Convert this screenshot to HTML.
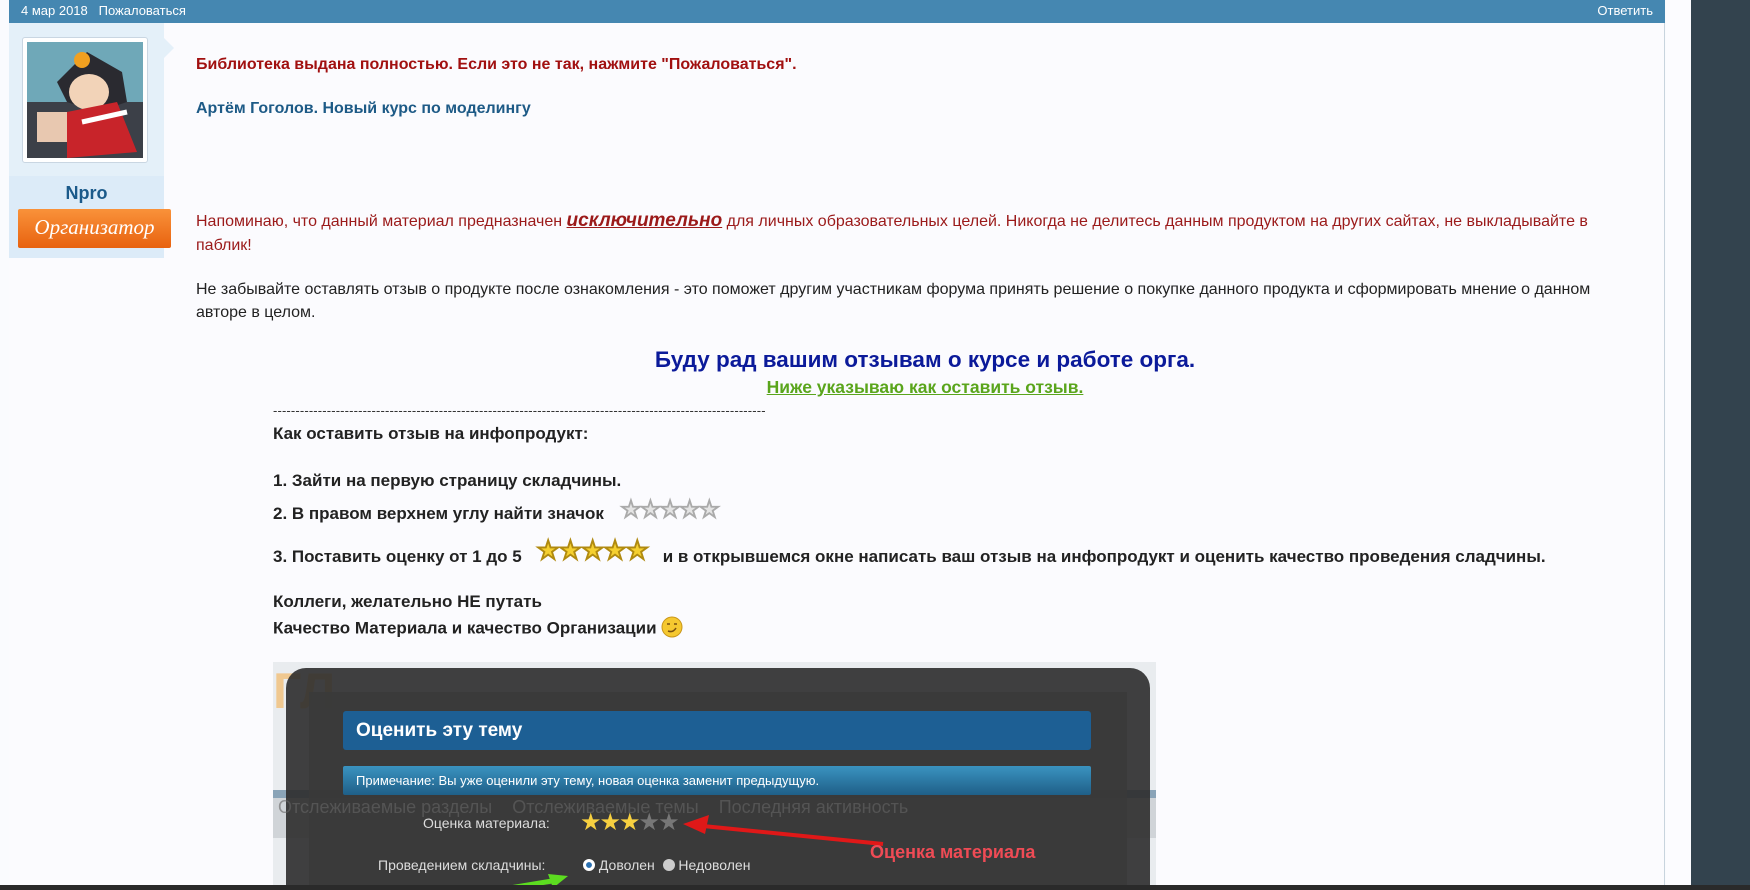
<!DOCTYPE html>
<html><head><meta charset="utf-8">
<style>
*{margin:0;padding:0;box-sizing:border-box}
body{width:1750px;height:890px;overflow:hidden;background:#fafbfe;font-family:"Liberation Sans",Arial,sans-serif;position:relative}
.abs{position:absolute;white-space:nowrap}
.bar{left:9px;top:0;width:1656px;height:23px;background:#4587b1;color:#fff;font-size:13px}
.main{left:9px;top:23px;width:1656px;height:867px;background:#fbfbfe;border-right:1px solid #c8d4de}
.side{left:9px;top:23px;width:155px;height:235px;background:#e4f0f9}
.t{font-size:16px;color:#222}
.l{font-size:17px;color:#222;font-weight:bold}
.b{font-weight:bold}
.st{line-height:0;display:inline-block;vertical-align:middle}
</style></head><body>
<div class="abs main"></div>
<div class="abs" style="left:1666px;top:0;width:25px;height:890px;background:#fcfcff"></div>
<div class="abs" style="left:1691px;top:0;width:59px;height:890px;background:#33434e"></div>
<div class="abs bar"><span style="position:absolute;left:12px;top:3px">4 мар 2018 &nbsp;&nbsp;Пожаловаться</span><span style="position:absolute;right:12px;top:3px">Ответить</span></div>
<div class="abs side"></div>
<div class="abs" style="left:9px;top:176px;width:155px;height:82px;background:#dcebf8"></div>
<div class="abs" style="left:164px;top:38px;width:0;height:0;border-top:10px solid transparent;border-bottom:10px solid transparent;border-left:10px solid #e4f0f9"></div>
<div class="abs" style="left:22px;top:37px;width:126px;height:126px;background:#fff;border:1px solid #c9d6e2;border-radius:3px;padding:4px">
<svg width="116" height="116" viewBox="0 0 116 116"><rect width="116" height="116" fill="#6fa8b8"/><rect y="60" width="116" height="56" fill="#3c4048"/><path d="M30 40 L60 10 L95 30 L100 60 L70 70 L40 60Z" fill="#2a2a30"/><ellipse cx="62" cy="50" rx="20" ry="18" fill="#f2d3b8"/><path d="M40 70 L90 60 L110 110 L40 116Z" fill="#c8242a"/><path d="M55 80 L100 70" stroke="#fff" stroke-width="5"/><rect x="10" y="70" width="30" height="30" fill="#e8c8b0"/><circle cx="55" cy="18" r="8" fill="#f0a020"/></svg></div>
<div class="abs" style="left:9px;top:183px;width:155px;text-align:center;font-size:18px;font-weight:bold;color:#1b5a8a">Npro</div>
<div class="abs" style="left:18px;top:209px;width:153px;height:39px;background:linear-gradient(#f9923a,#e8620f);border-radius:2px;color:#fff;font-family:'Liberation Serif',serif;font-style:italic;font-size:21px;text-align:center;line-height:37px">Организатор</div>

<div class="abs t b" style="left:196px;top:56px;color:#a11010">Библиотека выдана полностью. Если это не так, нажмите "Пожаловаться".</div>
<div class="abs t b" style="left:196px;top:100px;color:#1d5a86">Артём Гоголов. Новый курс по моделингу</div>
<div class="abs t" style="left:196px;top:209px;color:#9b1a1a;line-height:24px;white-space:normal;width:1425px">Напоминаю, что данный материал предназначен <b><i><u style="font-size:19px">исключительно</u></i></b> для личных образовательных целей. Никогда не делитесь данным продуктом на других сайтах, не выкладывайте в паблик!</div>
<div class="abs t" style="left:196px;top:278px;line-height:23px;white-space:normal;width:1425px;color:#222">Не забывайте оставлять отзыв о продукте после ознакомления - это поможет другим участникам форума принять решение о покупке данного продукта и сформировать мнение о данном авторе в целом.</div>
<div class="abs b" style="left:0;width:1850px;text-align:center;top:347px;font-size:22.5px;color:#0b1a9a">Буду рад вашим отзывам о курсе и работе орга.</div>
<div class="abs b" style="left:0;width:1850px;text-align:center;top:377px;font-size:17.5px;color:#5aa51c;text-decoration:underline">Ниже указываю как оставить отзыв.</div>
<div class="abs" style="left:273px;top:403px;font-size:13px;color:#333;letter-spacing:0.15px">--------------------------------------------------------------------------------------------------------------</div>
<div class="abs l" style="left:273px;top:424px">Как оставить отзыв на инфопродукт:</div>
<div class="abs l" style="left:273px;top:471px">1. Зайти на первую страницу складчины.</div>
<div class="abs l" style="left:273px;top:504px">2. В правом верхнем углу найти значок <span class="st" style="font-size:23px;color:#e4e4e4;-webkit-text-stroke:1px #aaa;letter-spacing:-1px;position:relative;top:-6px;margin-left:12px">★★★★★</span></div>
<div class="abs l" style="left:273px;top:547px">3. Поставить оценку от 1 до 5 <span class="st" style="font-size:26px;color:#f5d030;-webkit-text-stroke:1px #b08a10;letter-spacing:-1px;position:relative;top:-8px;margin:0 10px 0 10px">★★★★★</span> и в открывшемся окне написать ваш отзыв на инфопродукт и оценить качество проведения сладчины.</div>
<div class="abs l" style="left:273px;top:592px">Коллеги, желательно НЕ путать</div>
<div class="abs l" style="left:273px;top:618px">Качество Материала и качество Организации <svg class="st" style="position:relative;top:-2px" width="22" height="22"><circle cx="11" cy="11" r="10" fill="#f5c830" stroke="#c9961a"/><path d="M6 8h3M13 8h3M7 15q5 2 8-3" stroke="#7a5010" stroke-width="1.5" fill="none"/></svg></div>

<div class="abs" style="left:273px;top:662px;width:883px;height:228px;background:#e9ecef;overflow:hidden">
 <div style="position:absolute;left:0;top:0;width:80px;height:60px;color:#f0c890;font-size:50px;font-weight:bold">ГЛ</div>
 <div style="position:absolute;left:0;top:128px;width:883px;height:8px;background:#8aa4b8"></div>
 <div style="position:absolute;left:0;top:136px;width:883px;height:40px;background:#d0d4d8"></div>
 <div style="position:absolute;left:13px;top:6px;width:864px;height:240px;background:#2c2c2c;border-radius:20px;opacity:.9"></div>
 <div style="position:absolute;left:36px;top:30px;width:818px;height:220px;background:#3a3a3a;opacity:.9"></div>
 <div style="position:absolute;left:70px;top:49px;width:748px;height:39px;background:#1d5f94;border-radius:3px;color:#fff;font-weight:bold;font-size:19px;line-height:39px;padding-left:13px">Оценить эту тему</div>
 <div style="position:absolute;left:70px;top:104px;width:748px;height:29px;background:linear-gradient(#3a93c0,#1f5f88);border-radius:2px;color:#fff;font-size:13px;line-height:29px;padding-left:13px">Примечание: Вы уже оценили эту тему, новая оценка заменит предыдущую.</div>
 <div style="position:absolute;left:5px;top:135px;color:#666;font-size:18px;opacity:.6">Отслеживаемые разделы &nbsp;&nbsp; Отслеживаемые темы &nbsp;&nbsp; Последняя активность</div>
 <div style="position:absolute;left:150px;top:153px;color:#ddd;font-size:14px">Оценка материала:</div>
 <div style="position:absolute;left:307px;top:146px;font-size:24px;letter-spacing:-2px"><span style="color:#f7d040">★★★</span><span style="color:#777">★★</span></div>
 <svg style="position:absolute;left:410px;top:148px" width="220" height="40"><path d="M10 15 L200 34" stroke="#e01818" stroke-width="4"/><path d="M0 14 L26 5 L22 24Z" fill="#e01818"/></svg>
 <div style="position:absolute;left:597px;top:180px;color:#ef4b55;font-size:18px;font-weight:bold">Оценка материала</div>
 <div style="position:absolute;left:105px;top:195px;color:#ddd;font-size:14px">Проведением складчины:</div>
 <div style="position:absolute;left:310px;top:195px;color:#ddd;font-size:14px"><span style="display:inline-block;width:12px;height:12px;border-radius:50%;background:#dde;border:3px solid #fff;box-shadow:inset 0 0 0 3px #2a70b0;vertical-align:-1px"></span> Доволен &nbsp;<span style="display:inline-block;width:12px;height:12px;border-radius:50%;background:#ccc;vertical-align:-1px"></span> Недоволен</div>
 <svg style="position:absolute;left:225px;top:210px" width="80" height="20"><path d="M0 18 L60 8" stroke="#5cdc20" stroke-width="5"/><path d="M70 4 L50 2 L55 16Z" fill="#5cdc20"/></svg>
</div>
<div class="abs" style="left:0;top:885px;width:1750px;height:5px;background:#2a2a2a"></div>
</body></html>
